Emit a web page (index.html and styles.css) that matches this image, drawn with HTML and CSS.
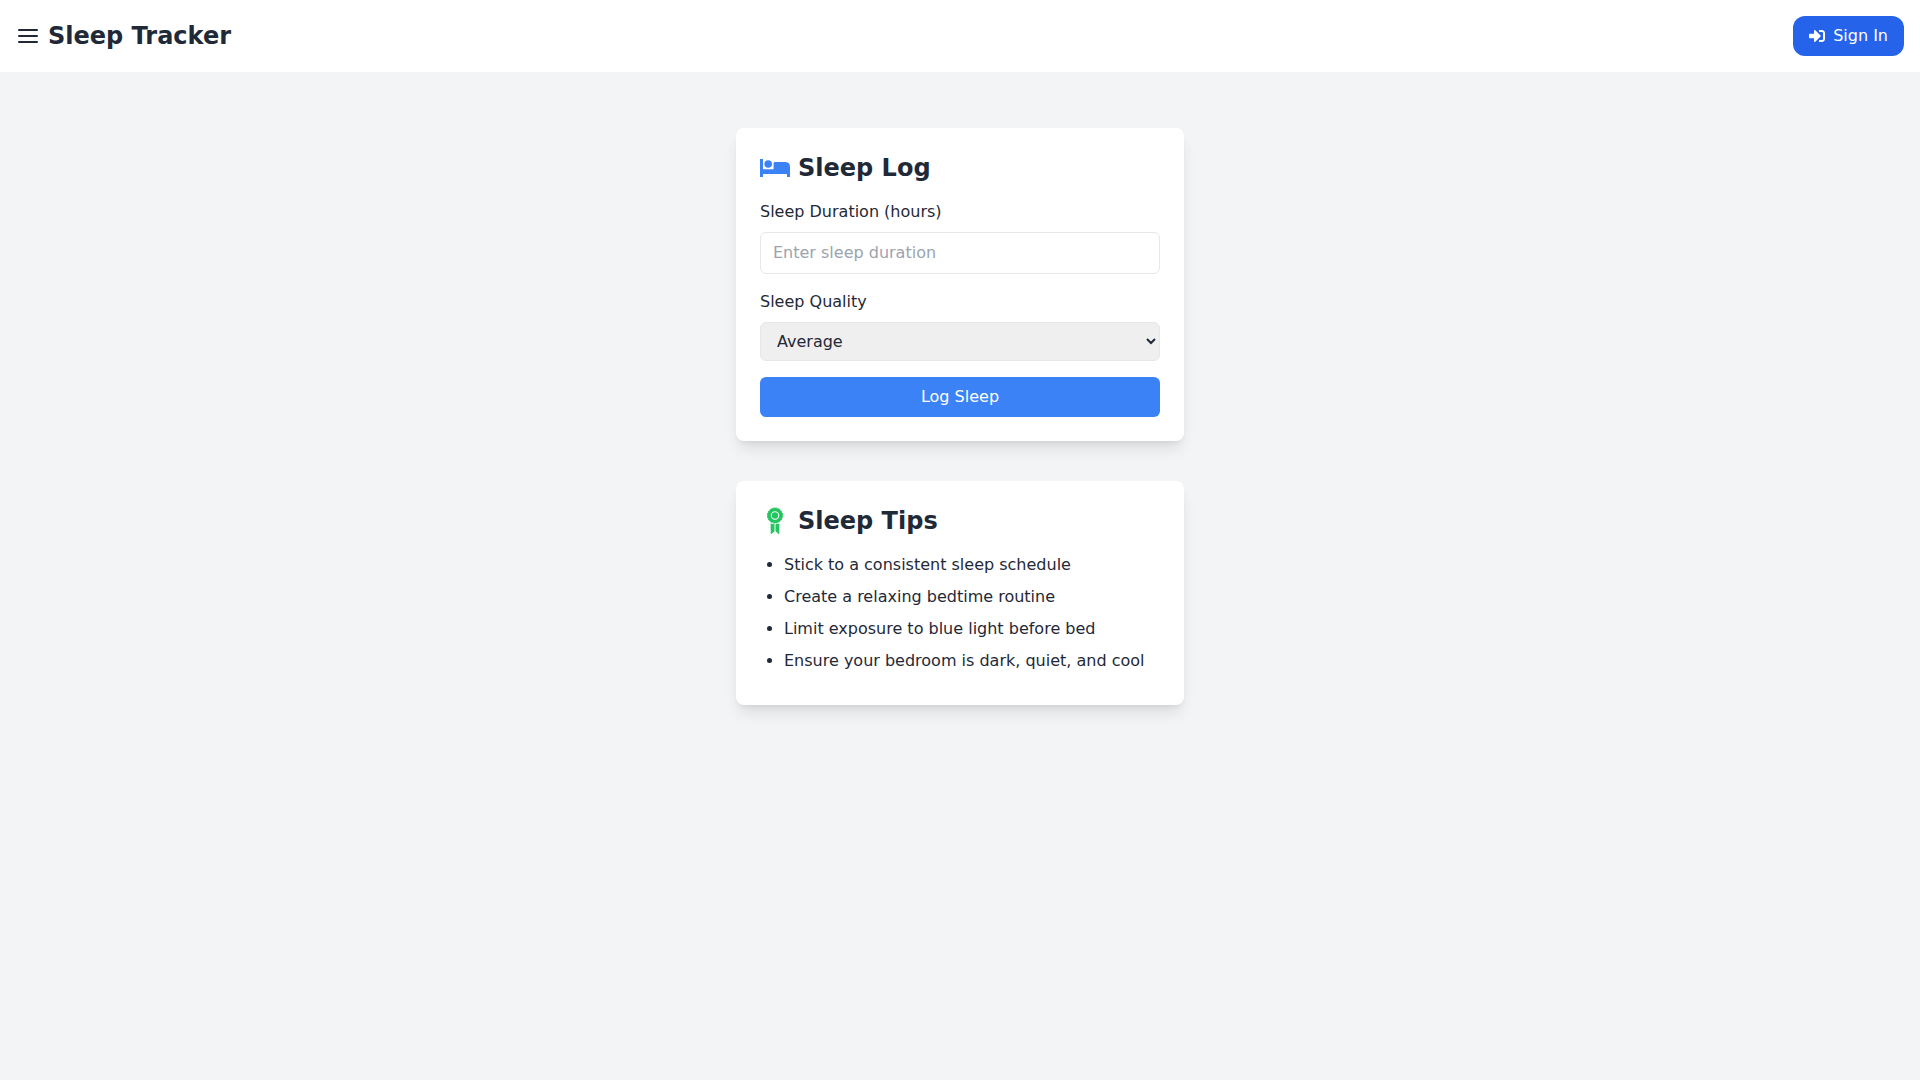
FILE: index.html
```html
<!DOCTYPE html>
<html lang="en">
<head>
    <meta charset="UTF-8">
    <meta name="viewport" content="width=device-width, initial-scale=1.0">
    <title>Sleep Tracker</title>
    <link rel="stylesheet" href="styles.css">
</head>
<body>

  <!-- Header -->
  <header class="header">
    <div class="brand">
      <button type="button" class="menu-btn" aria-label="Menu">
        <svg width="24" height="24" viewBox="0 0 24 24" fill="none" stroke="currentColor" stroke-width="2" stroke-linecap="round">
          <line x1="3" y1="12" x2="21" y2="12"/>
          <line x1="3" y1="6" x2="21" y2="6"/>
          <line x1="3" y1="18" x2="21" y2="18"/>
        </svg>
      </button>
      <h1>Sleep Tracker</h1>
    </div>
    <button type="button" class="signin-btn">
      <svg width="16" height="16" viewBox="0 0 512 512" fill="currentColor">
        <path d="M416 448h-84c-6.600 0-12-5.400-12-12v-40c0-6.600 5.400-12 12-12h84c17.700 0 32-14.300 32-32V160c0-17.700-14.300-32-32-32h-84c-6.600 0-12-5.400-12-12V76c0-6.600 5.400-12 12-12h84c53 0 96 43 96 96v192c0 53-43 96-96 96zm-47-209L201 71c-15-15-41-4.500-41 17v96H24c-13.300 0-24 10.700-24 24v96c0 13.300 10.700 24 24 24h136v96c0 21.500 26 32 41 17l168-168c9.300-9.400 9.300-24.600 0-34z"/>
      </svg>
      Sign In
    </button>
  </header>

  <!-- Main Content -->
  <main class="main">
    <section class="card">
      <h2 class="card-title">
        <svg class="blue" width="30" height="30" viewBox="0 0 30 30" fill="currentColor">
          <path d="M0 6h3v10.300h10.600V10.200q0-1.200 1.200-1.200H25q5 0 5 5v10h-3v-3H3v3H0z"/>
          <circle cx="8.200" cy="11" r="3.800"/>
        </svg>
        Sleep Log
      </h2>
      <form>
        <div class="field">
          <label for="duration">Sleep Duration (hours)</label>
          <input type="number" id="duration" placeholder="Enter sleep duration">
        </div>
        <div class="field">
          <label for="quality">Sleep Quality</label>
          <select id="quality">
            <option>Poor</option>
            <option selected>Average</option>
            <option>Good</option>
          </select>
        </div>
        <button type="button" class="log-btn">Log Sleep</button>
      </form>
    </section>

    <section class="card">
      <h2 class="card-title">
        <svg class="green" width="30" height="30" viewBox="0 0 30 30" fill="currentColor">
          <path fill-rule="evenodd" d="M15 1.900a7.600 7.600 0 1 0 0 15.200 7.600 7.600 0 1 0 0-15.200zM15 5.200a4.300 4.300 0 1 0 0 8.600 4.300 4.300 0 1 0 0-8.600z"/>
          <circle cx="15" cy="9.500" r="7.600" fill="none" stroke="currentColor" stroke-dasharray="2 1"/>
          <circle cx="15" cy="9.500" r="3.200"/>
          <path d="M10.600 17.500l3.900.700v7l-3.700 3.200zM19.400 17.500l-3.900.700v7l3.700 3.200z"/>
        </svg>
        Sleep Tips
      </h2>
      <ul class="tips">
        <li>Stick to a consistent sleep schedule</li>
        <li>Create a relaxing bedtime routine</li>
        <li>Limit exposure to blue light before bed</li>
        <li>Ensure your bedroom is dark, quiet, and cool</li>
      </ul>
    </section>
  </main>

</body>
</html>
```
FILE: styles.css
```css
* {
    box-sizing: border-box;
}
body {
    font-family: "DejaVu Sans", sans-serif;
    font-size: 16px;
    line-height: 24px;
    background-color: #f3f4f6;
    color: #1f2937;
    min-height: 100vh;
    margin: 0;
}
h1, h2 {
    font-size: 24px;
    line-height: 32px;
    font-weight: bold;
    margin: 0;
}
button, input, select {
    font-family: inherit;
    font-size: 16px;
    color: inherit;
}
button {
    line-height: 24px;
    border: none;
    cursor: pointer;
}
svg {
    display: block;
}
.header {
    display: flex;
    justify-content: space-between;
    align-items: center;
    padding: 16px;
    background-color: #fff;
}
.brand {
    display: flex;
    align-items: center;
    gap: 8px;
}
.menu-btn {
    padding: 0;
    background: none;
}
.signin-btn {
    display: flex;
    align-items: center;
    gap: 8px;
    padding: 8px 16px;
    background-color: #2563eb;
    color: #fff;
    border-radius: 12px;
}
.signin-btn:hover {
    background-color: #1d4ed8;
}
.main {
    display: flex;
    flex-direction: column;
    align-items: center;
    gap: 40px;
    padding: 56px 16px;
}
.card {
    width: 100%;
    max-width: 448px;
    padding: 24px;
    background-color: #fff;
    border-radius: 8px;
    box-shadow: 0 10px 15px -3px rgba(0, 0, 0, 0.1), 0 4px 6px -4px rgba(0, 0, 0, 0.1);
}
.card-title {
    display: flex;
    align-items: center;
    gap: 8px;
    margin-bottom: 16px;
}
.blue {
    color: #3b82f6;
}
.green {
    color: #22c55e;
}
.field {
    margin-bottom: 16px;
}
.field label {
    display: block;
    margin-bottom: 8px;
}
.field input,
.field select {
    display: block;
    width: 100%;
    padding: 8px 12px;
    border: 1px solid #e5e7eb;
    border-radius: 6px;
}
.field input {
    height: 42px;
    padding-bottom: 10px;
}
.field input::placeholder {
    color: #9ca3af;
}
.field select {
    background-color: #efefef;
}
.log-btn {
    width: 100%;
    padding: 8px 16px;
    background-color: #3b82f6;
    color: #fff;
    border-radius: 6px;
}
.log-btn:hover {
    background-color: #2563eb;
}
.tips {
    margin: 0;
    padding-left: 24px;
}
.tips li {
    margin-bottom: 8px;
}
```
